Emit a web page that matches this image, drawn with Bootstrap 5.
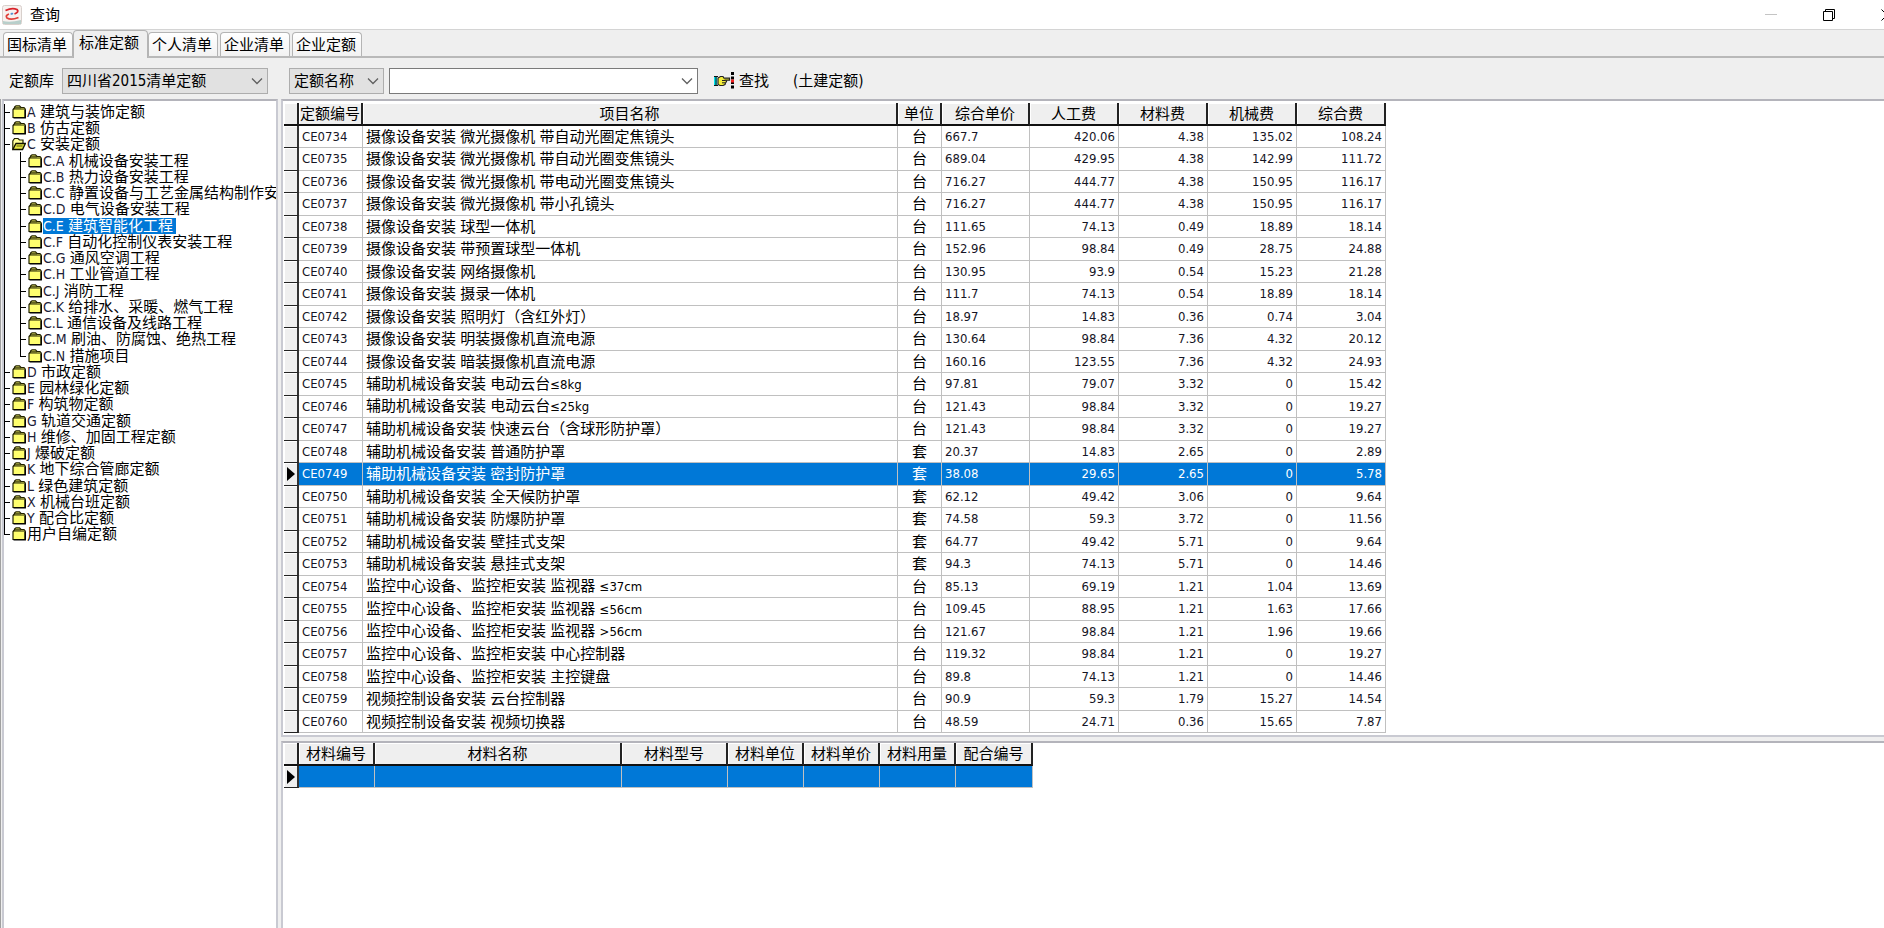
<!DOCTYPE html>
<html lang="zh-CN">
<head>
<meta charset="utf-8">
<meta name="viewport" content="width=device-width, initial-scale=1">
<title>查询</title>
<link href="https://cdn.jsdelivr.net/npm/bootstrap@5.3.0/dist/css/bootstrap.min.css" rel="stylesheet">
<style>
  :root { --face: #efefef; --edge: #b4b4bb; --pick: #0078d7; }
  body { font: 15px/18px "DejaVu Sans Condensed", "Noto Sans CJK SC", sans-serif; color: #000; background: var(--face); }
  .lat { font-size: 13px; }
  .titlebar { height: 30px; border-bottom: 1px solid #d4d4d4; padding-left: 2px; }
  .winbtns { margin-right: -32px; }
  .winbtns button { width: 58px; height: 28px; border: 0; background: none; padding: 0; display: flex; align-items: center; justify-content: center; }
  .tabstrip { height: 28px; border-bottom: 2px solid #b9b9b9; padding-left: 3px; }
  .tabstrip button { width: 70px; height: 24px; margin-right: 2px; padding: 0 0 0 3px; text-align: left; border: 1px solid #b4b4b4; border-bottom: 0; border-radius: 4px 4px 0 0; background: linear-gradient(#fff, #f2f2f2); color: #000; white-space: nowrap; }
  .tabstrip button:first-child { margin-right: 0; }
  .tabstrip button.active { width: 75px; height: 28px; margin: 0 0 -2px; padding: 0 0 3px 5px; background: var(--face); }
  .tools { height: 41px; padding: 10px 0 0 9px; }
  .tools select { height: 26px; border: 1px solid #adadad; border-radius: 0; background-color: #e1e1e1; color: #000; padding: 0 24px 0 4px; appearance: none; }
  .lib select { width: 206px; }
  .pick { position: relative; }
  .pick > svg { position: absolute; right: 5px; top: 9px; pointer-events: none; }
  .namepick select { width: 95px; }
  .keyword input { width: 309px; height: 26px; border: 1px solid #7a7a7a; border-radius: 0; background: #fff; padding: 0 24px 0 4px; display: block; }
  .keyword { margin-left: 5px; }
  .find { border: 0; background: none; padding: 0; color: #000; margin: 0 24px 0 16px; }
  .toolleft { width: 280px; flex: none; }
  .pane { background: #fff; border: 2px solid #c9cad2; border-top-color: var(--edge); overflow: hidden; }
  .frame { border-left: 1px solid #a0a0a0; }
  .side { width: 276px; margin: 0 3px 0 1px; flex: none; border-bottom: 0; }
  .tree { margin: 0; padding: 3px 0 0; list-style: none; }
  .tree li { display: flex; align-items: center; height: 16px; padding-left: 8px; white-space: nowrap; position: relative; line-height: 16px; }
  .tree li:nth-child(4n) { height: 17px; }
  .tree li.sub { padding-left: 24px; }
  .tree li svg { flex: none; margin-right: 1px; }
  .tree a { color: #000; text-decoration: none; height: 16px; }
  .tree .lat { font-size: 14px; color: #1c1c38; }
  .tree a.chosen { background: var(--pick); color: #fff; padding-right: 3px; }
  .tree a.chosen .lat { color: #fff; }
  .tree li::before { content: ""; position: absolute; left: 0; top: 0; bottom: 0; border-left: 1px solid #000; }
  .tree li:last-child::before { bottom: 50%; }
  .tree li::after { content: ""; position: absolute; left: 0; width: 6px; top: 50%; border-top: 1px solid #000; }
  .tree li.sub::after { left: 16px; width: 6px; }
  .stem { position: absolute; left: 16px; top: 0; bottom: 0; border-left: 1px solid #000; }
  .stem.end { bottom: 50%; }
  .upper, .lower { border-right: 0; padding-left: 1px; }
  .upper { padding-top: 2px; padding-bottom: 2px; }
  .lower { border-bottom: 0; }
  .split { height: 4px; }
  .grid { table-layout: fixed; border-collapse: separate; border-spacing: 0; white-space: nowrap; }
  .grid th { height: 23px; padding: 0; text-align: center; font-weight: 400; background: var(--face); border-right: 2px solid #222; border-bottom: 2px solid #111; box-shadow: inset 1px 1px 0 #fff; line-height: 20px; }
  .grid td { height: 22px; padding: 0 3px; border-right: 1px solid #c0c0c0; border-bottom: 1px solid #c0c0c0; overflow: hidden; line-height: 20px; }
  .grid tbody tr:nth-child(even) td { height: 23px; }
  .grid td.num { font-size: 13px; text-align: right; color: #151525; }
  .grid td.code { font-size: 13px; color: #151525; }
  .grid td.gut { padding: 0; background: var(--face); border-right: 2px solid #333; border-bottom: 1px solid #222; box-shadow: inset 1px 1px 0 #fff; }
  .grid td.gut svg { display: block; margin-left: 3px; }
  .grid tr.chosen td:not(.gut) { background: var(--pick); color: #fff; }
</style>
</head>
<body class="vh-100 overflow-hidden d-flex flex-column">
<svg class="d-none" aria-hidden="true">
  <symbol id="shut" viewBox="0 0 14 14">
    <path d="M1 12.500V4.500L2.500 3V2L4 .8H7.500L9 2.500H12L13.200 4V12.500Z" fill="#ffff6e" stroke="#222200" stroke-width="1.200"/>
    <path d="M1 4H12.500M2.500 2.800H9" stroke="#222200" fill="none"/>
    <path d="M13.200 4.500V12.900H1.500" stroke="#000" stroke-width="1.400" fill="none"/>
  </symbol>
  <symbol id="open" viewBox="0 0 14 14">
    <path d="M.8 12V4L2.500 1.500H6L7.500 3H11V6" fill="#ffff9a" stroke="#222200" stroke-width="1.200"/>
    <path d="M.8 12.500L4 6.500H13.400L10.500 12.500Z" fill="#e6e640" stroke="#111100" stroke-width="1.400"/>
    <path d="M4.500 9H10.500" stroke="#55550a"/>
  </symbol>
  <symbol id="down" viewBox="0 0 12 8"><path d="M1 1.500L6 6.500L11 1.500" fill="none" stroke="#606060" stroke-width="1.300"/></symbol>
</svg>

<header class="titlebar bg-white d-flex align-items-center justify-content-between overflow-hidden flex-shrink-0">
  <div class="d-flex align-items-center">
    <svg width="20" height="20" viewBox="0 0 20 20" aria-hidden="true">
      <rect x=".5" y=".5" width="19" height="19" rx="2" fill="#f7f1ef" stroke="#d8d0cc"/>
      <path d="M1 19V16Q8 18 19 15V19Z" fill="#b8cfcb"/>
      <path d="M3.500 5.500Q10 2.500 15 4.500Q17.500 7 12.500 9" fill="none" stroke="#d8232a" stroke-width="1.800"/>
      <path d="M16.500 12.500Q9 15.500 5 13Q3 10.500 7 9" fill="none" stroke="#e0403a" stroke-width="1.800"/>
      <path d="M8 9L10 7.500L11.500 8.500L10 10Z" fill="#4f8fd0"/>
    </svg>
    <span class="ms-1 ps-1">查询</span>
  </div>
  <div class="winbtns d-flex">
    <button type="button" aria-label="最小化"><svg width="12" height="12" viewBox="0 0 12 12"><path d="M0 5.500H12" stroke="#c4c4c4"/></svg></button>
    <button type="button" aria-label="还原"><svg width="12" height="12" viewBox="0 0 12 12"><path d="M.5 2.500H9.500V11.500H.5ZM2.500 2.500V.5H11.500V9.500H9.500" fill="none" stroke="#000"/></svg></button>
    <button type="button" aria-label="关闭"><svg width="12" height="12" viewBox="0 0 12 12"><path d="M.5 .5L11.500 11.500M11.500 .5L.5 11.500" stroke="#000"/></svg></button>
  </div>
</header>

<nav class="tabstrip d-flex align-items-end flex-shrink-0" role="tablist">
  <button type="button" role="tab">国标清单</button><button type="button" role="tab" class="active" aria-selected="true">标准定额</button><button type="button" role="tab">个人清单</button><button type="button" role="tab">企业清单</button><button type="button" role="tab">企业定额</button>
</nav>

<div class="tools d-flex align-items-start flex-shrink-0">
  <div class="toolleft lib d-flex align-items-center">
    <label for="lib" class="me-2">定额库</label>
    <div class="pick"><select id="lib"><option>四川省2015清单定额</option></select><svg width="12" height="8"><use href="#down"/></svg></div>
  </div>
  <div class="d-flex align-items-center">
    <div class="pick namepick"><select aria-label="查找字段"><option>定额名称</option></select><svg width="12" height="8"><use href="#down"/></svg></div>
    <div class="pick keyword"><input type="text" aria-label="关键字"><svg width="12" height="8"><use href="#down"/></svg></div>
    <button type="button" class="find d-flex align-items-center">
      <svg width="21" height="18" viewBox="0 0 21 18" aria-hidden="true">
        <path d="M0 4H3V14H0Z" fill="#00e5ee"/><path d="M2 4.500V13.500M0 4.500H4M0 13.500H4" stroke="#111"/>
        <path d="M4 6L6.500 4.500H9L10 6.200H15.500V8.200H11.500L12.500 9.500L11.500 11L11 12.500L9 13.500H6L4 12.500Z" fill="#f4ee3a" stroke="#222" stroke-width="1.200"/>
        <path d="M8 8.500H11M8 10.800H11" stroke="#222"/>
        <path d="M18.500 0V18" stroke="#000" stroke-width="3" stroke-dasharray="3 1.500"/><path d="M18.500 7.500V10.500" stroke="#f02020" stroke-width="3"/>
      </svg>
      <span class="ps-1">查找</span>
    </button>
    <span>(土建定额)</span>
  </div>
</div>

<main class="frame d-flex flex-grow-1 overflow-hidden">
  <aside class="pane side"><ul class="tree" id="tree"></ul></aside>
  <section class="d-flex flex-column flex-grow-1 overflow-hidden">
    <div class="pane flex-shrink-0 upper">
      <table class="grid" style="width:1102px">
        <colgroup><col style="width:15px"><col style="width:64px"><col style="width:535px"><col style="width:44px"><col style="width:88px"><col style="width:89px"><col style="width:89px"><col style="width:89px"><col style="width:89px"></colgroup>
        <thead><tr><th></th><th>定额编号</th><th>项目名称</th><th>单位</th><th>综合单价</th><th>人工费</th><th>材料费</th><th>机械费</th><th>综合费</th></tr></thead>
        <tbody id="rows"></tbody>
      </table>
    </div>
    <div class="split flex-shrink-0"></div>
    <div class="pane lower flex-grow-1">
      <table class="grid" style="width:749px">
        <colgroup><col style="width:15px"><col style="width:76px"><col style="width:247px"><col style="width:106px"><col style="width:76px"><col style="width:76px"><col style="width:76px"><col style="width:77px"></colgroup>
        <thead><tr><th></th><th>材料编号</th><th>材料名称</th><th>材料型号</th><th>材料单位</th><th>材料单价</th><th>材料用量</th><th>配合编号</th></tr></thead>
        <tbody><tr class="chosen"><td class="gut"><svg width="8" height="14" viewBox="0 0 8 14"><path d="M0 0L8 7L0 14Z"/></svg></td><td></td><td></td><td></td><td></td><td></td><td></td><td></td></tr></tbody>
      </table>
    </div>
  </section>
</main>

<script src="https://cdn.jsdelivr.net/npm/bootstrap@5.3.0/dist/js/bootstrap.bundle.min.js"></script>
<script>
  // Latin runs are set one size smaller than the Chinese text.
  const mix = s => s.replace(/[≤>A-Za-z0-9.]+/g, m => `<span class="lat">${m.replace('>', '&gt;')}</span>`);

  const tree = `A 建筑与装饰定额
B 仿古定额
C 安装定额
C.A 机械设备安装工程
C.B 热力设备安装工程
C.C 静置设备与工艺金属结构制作安
C.D 电气设备安装工程
C.E 建筑智能化工程
C.F 自动化控制仪表安装工程
C.G 通风空调工程
C.H 工业管道工程
C.J 消防工程
C.K 给排水、采暖、燃气工程
C.L 通信设备及线路工程
C.M 刷油、防腐蚀、绝热工程
C.N 措施项目
D 市政定额
E 园林绿化定额
F 构筑物定额
G 轨道交通定额
H 维修、加固工程定额
J 爆破定额
K 地下综合管廊定额
L 绿色建筑定额
X 机械台班定额
Y 配合比定额
用户自编定额`.split('\n');
  document.getElementById('tree').innerHTML = tree.map(t => {
    const sub = t[1] === '.';
    const stem = sub ? `<i class="stem${t.startsWith('C.N') ? ' end' : ''}"></i>` : '';
    const icon = t.startsWith('C ') ? 'open' : 'shut';
    return `<li${sub ? ' class="sub"' : ''}>${stem}<svg width="14" height="14"><use href="#${icon}"/></svg><a href="#"${t.startsWith('C.E') ? ' class="chosen"' : ''}>${mix(t)}</a></li>`;
  }).join('');

  const rows = `摄像设备安装 微光摄像机 带自动光圈定焦镜头|台|667.7|420.06|4.38|135.02|108.24
摄像设备安装 微光摄像机 带自动光圈变焦镜头|台|689.04|429.95|4.38|142.99|111.72
摄像设备安装 微光摄像机 带电动光圈变焦镜头|台|716.27|444.77|4.38|150.95|116.17
摄像设备安装 微光摄像机 带小孔镜头|台|716.27|444.77|4.38|150.95|116.17
摄像设备安装 球型一体机|台|111.65|74.13|0.49|18.89|18.14
摄像设备安装 带预置球型一体机|台|152.96|98.84|0.49|28.75|24.88
摄像设备安装 网络摄像机|台|130.95|93.9|0.54|15.23|21.28
摄像设备安装 摄录一体机|台|111.7|74.13|0.54|18.89|18.14
摄像设备安装 照明灯（含红外灯）|台|18.97|14.83|0.36|0.74|3.04
摄像设备安装 明装摄像机直流电源|台|130.64|98.84|7.36|4.32|20.12
摄像设备安装 暗装摄像机直流电源|台|160.16|123.55|7.36|4.32|24.93
辅助机械设备安装 电动云台≤8kg|台|97.81|79.07|3.32|0|15.42
辅助机械设备安装 电动云台≤25kg|台|121.43|98.84|3.32|0|19.27
辅助机械设备安装 快速云台（含球形防护罩）|台|121.43|98.84|3.32|0|19.27
辅助机械设备安装 普通防护罩|套|20.37|14.83|2.65|0|2.89
辅助机械设备安装 密封防护罩|套|38.08|29.65|2.65|0|5.78
辅助机械设备安装 全天候防护罩|套|62.12|49.42|3.06|0|9.64
辅助机械设备安装 防爆防护罩|套|74.58|59.3|3.72|0|11.56
辅助机械设备安装 壁挂式支架|套|64.77|49.42|5.71|0|9.64
辅助机械设备安装 悬挂式支架|套|94.3|74.13|5.71|0|14.46
监控中心设备、监控柜安装 监视器 ≤37cm|台|85.13|69.19|1.21|1.04|13.69
监控中心设备、监控柜安装 监视器 ≤56cm|台|109.45|88.95|1.21|1.63|17.66
监控中心设备、监控柜安装 监视器 >56cm|台|121.67|98.84|1.21|1.96|19.66
监控中心设备、监控柜安装 中心控制器|台|119.32|98.84|1.21|0|19.27
监控中心设备、监控柜安装 主控键盘|台|89.8|74.13|1.21|0|14.46
视频控制设备安装 云台控制器|台|90.9|59.3|1.79|15.27|14.54
视频控制设备安装 视频切换器|台|48.59|24.71|0.36|15.65|7.87`.split('\n');
  document.getElementById('rows').innerHTML = rows.map((r, i) => {
    const [name, unit, price, ...fees] = r.split('|');
    const on = i === 15;
    const mark = on ? '<svg width="8" height="14" viewBox="0 0 8 14"><path d="M0 0L8 7L0 14Z"/></svg>' : '';
    return `<tr${on ? ' class="chosen"' : ''}><td class="gut">${mark}</td><td class="code">CE0${734 + i}</td><td>${mix(name)}</td><td class="text-center">${unit}</td><td class="code">${price}</td>${fees.map(f => `<td class="num">${f}</td>`).join('')}</tr>`;
  }).join('');
</script>
</body>
</html>
